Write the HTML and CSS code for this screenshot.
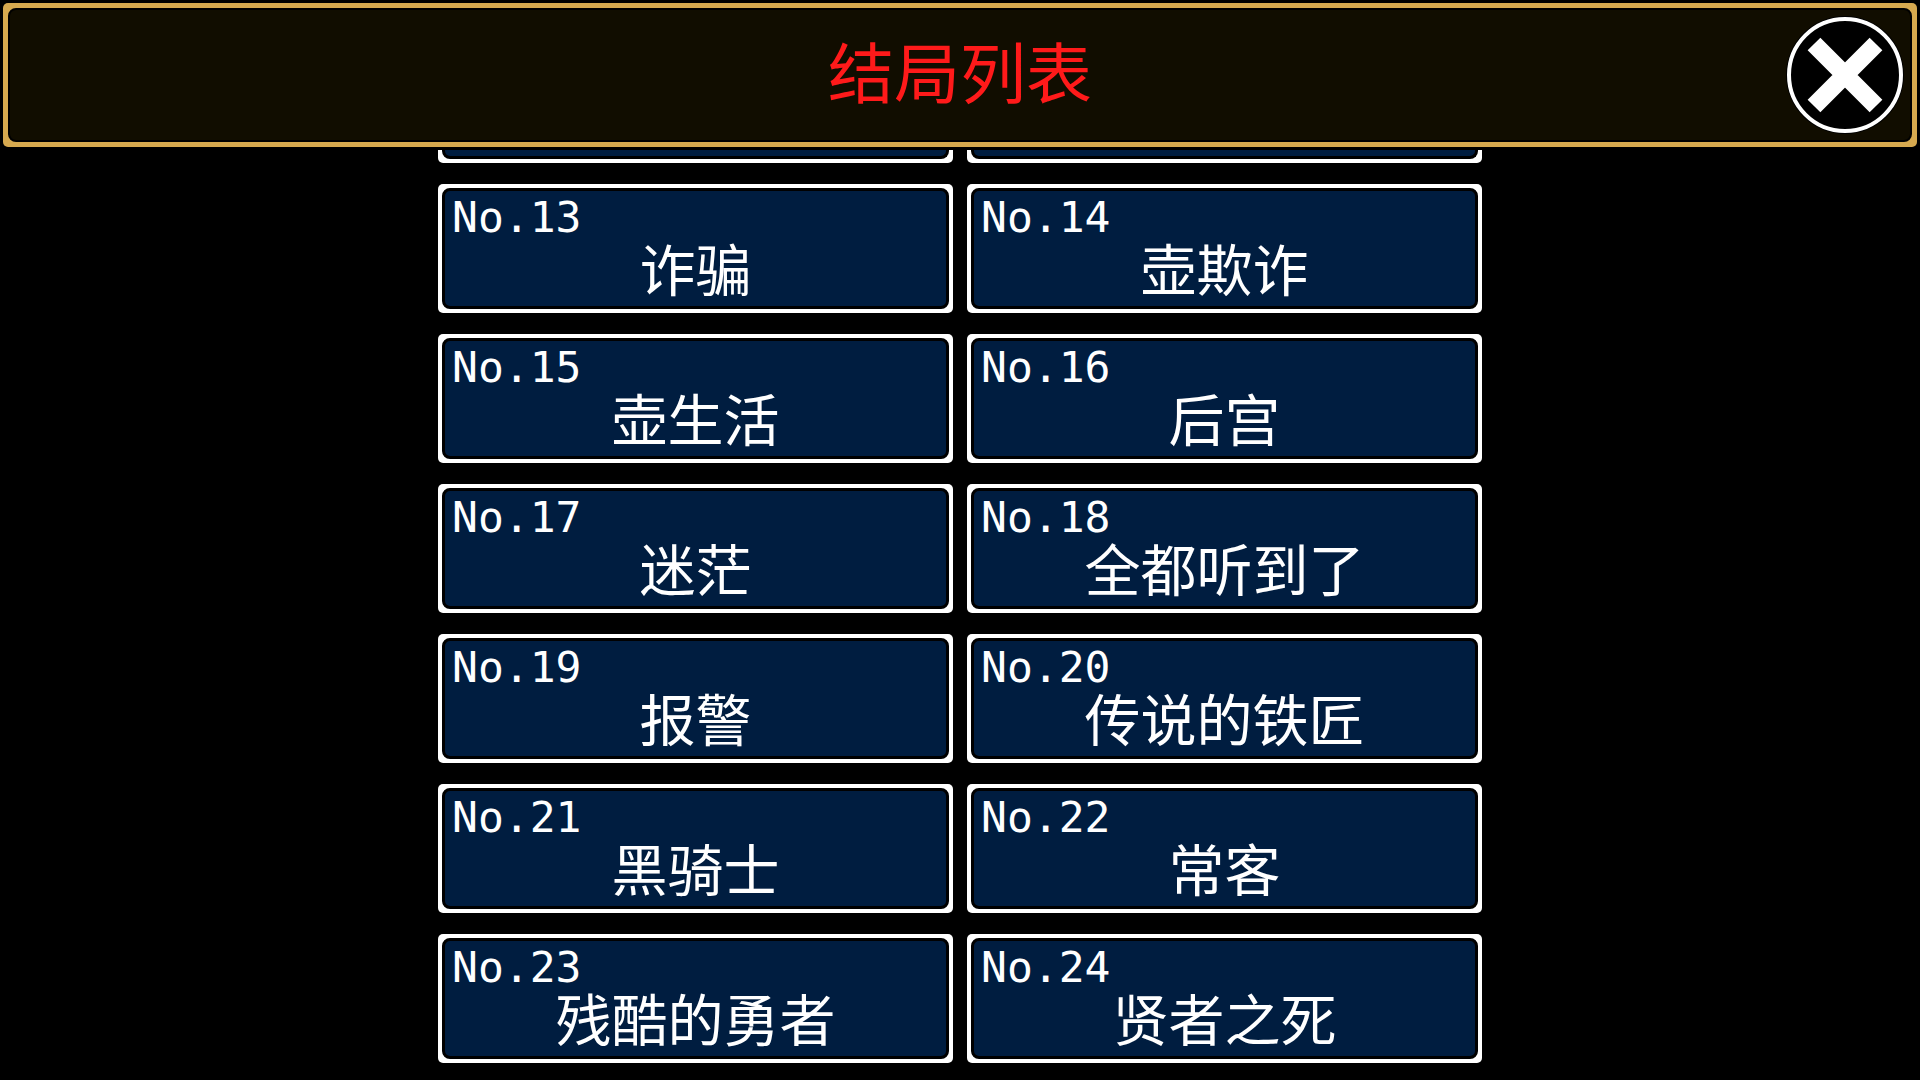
FILE: index.html
```
<!DOCTYPE html>
<html lang="zh-CN">
<head>
  <meta charset="UTF-8">
  <meta name="viewport" content="width=device-width, initial-scale=1.0">
  <title>结局列表</title>
  <link rel="stylesheet" href="styles.css">
</head>
<body>
  <header class="header">
    <div class="header-inner">
      <h1>结局列表</h1>
      <button class="close" type="button" aria-label="关闭">
        <svg viewBox="0 0 120 120" aria-hidden="true">
          <circle cx="60" cy="60" r="59" fill="#000"/>
          <circle cx="60" cy="60" r="56" fill="#000" stroke="#fff" stroke-width="4"/>
          <path d="M29 29L91 91M91 29L29 91" stroke="#fff" stroke-width="18" fill="none"/>
        </svg>
      </button>
    </div>
  </header>

  <main class="list">
    <!-- lower edge of the row scrolled under the header -->
    <div class="card cut"><span class="panel"></span></div>
    <div class="card cut"><span class="panel"></span></div>

    <button class="card" type="button"><span class="panel"><span class="no">No.13</span><span class="name">诈骗</span></span></button>
    <button class="card" type="button"><span class="panel"><span class="no">No.14</span><span class="name">壶欺诈</span></span></button>
    <button class="card" type="button"><span class="panel"><span class="no">No.15</span><span class="name">壶生活</span></span></button>
    <button class="card" type="button"><span class="panel"><span class="no">No.16</span><span class="name">后宫</span></span></button>
    <button class="card" type="button"><span class="panel"><span class="no">No.17</span><span class="name">迷茫</span></span></button>
    <button class="card" type="button"><span class="panel"><span class="no">No.18</span><span class="name">全都听到了</span></span></button>
    <button class="card" type="button"><span class="panel"><span class="no">No.19</span><span class="name">报警</span></span></button>
    <button class="card" type="button"><span class="panel"><span class="no">No.20</span><span class="name">传说的铁匠</span></span></button>
    <button class="card" type="button"><span class="panel"><span class="no">No.21</span><span class="name">黑骑士</span></span></button>
    <button class="card" type="button"><span class="panel"><span class="no">No.22</span><span class="name">常客</span></span></button>
    <button class="card" type="button"><span class="panel"><span class="no">No.23</span><span class="name">残酷的勇者</span></span></button>
    <button class="card" type="button"><span class="panel"><span class="no">No.24</span><span class="name">贤者之死</span></span></button>
  </main>
</body>
</html>
```

FILE: styles.css
```
* {
  box-sizing: border-box;
}
body {
  margin: 0;
  background: #000;
  color: #fff;
  font-family: "Noto Sans CJK SC", sans-serif;
}
.header {
  margin: 3px;
  padding: 5px;
  background: #d6a94f;
  border-radius: 5px;
}
.header-inner {
  display: grid;
  grid-template-columns: 1fr auto 1fr;
  align-items: start;
  padding: 5px;
  background: #110d00;
  border: 2px solid #000;
  border-radius: 8px;
}
h1 {
  grid-column: 2;
  margin: 0;
  color: #ff1a1a;
  font-size: 66px;
  font-weight: 400;
  line-height: 108px;
}
.close {
  justify-self: end;
  width: 120px;
  height: 120px;
  padding: 0;
  background: none;
  border: none;
  cursor: pointer;
}
.close svg {
  display: block;
}
.list {
  display: grid;
  grid-template-columns: 1fr 1fr;
  gap: 21px 14px;
  max-width: 1044px;
  margin: 0 auto;
}
.card {
  display: block;
  padding: 4px;
  background: #fff;
  border: none;
  border-radius: 5px;
  color: #fff;
  font-family: inherit;
  cursor: pointer;
}
.panel {
  display: block;
  padding: 4px 7px 13px;
  background: #001d40;
  border: 3px solid #000;
  border-radius: 8px;
}
.no {
  display: block;
  font-family: "DejaVu Sans Mono", monospace;
  font-size: 43px;
  line-height: 45px;
  text-align: left;
}
.name {
  display: block;
  font-size: 56px;
  line-height: 53px;
  text-align: center;
}
.cut {
  padding-top: 0;
  border-top-left-radius: 0;
  border-top-right-radius: 0;
  cursor: default;
}
.cut .panel {
  height: 9px;
  padding: 0;
  border-top: none;
  border-top-left-radius: 0;
  border-top-right-radius: 0;
}
```
